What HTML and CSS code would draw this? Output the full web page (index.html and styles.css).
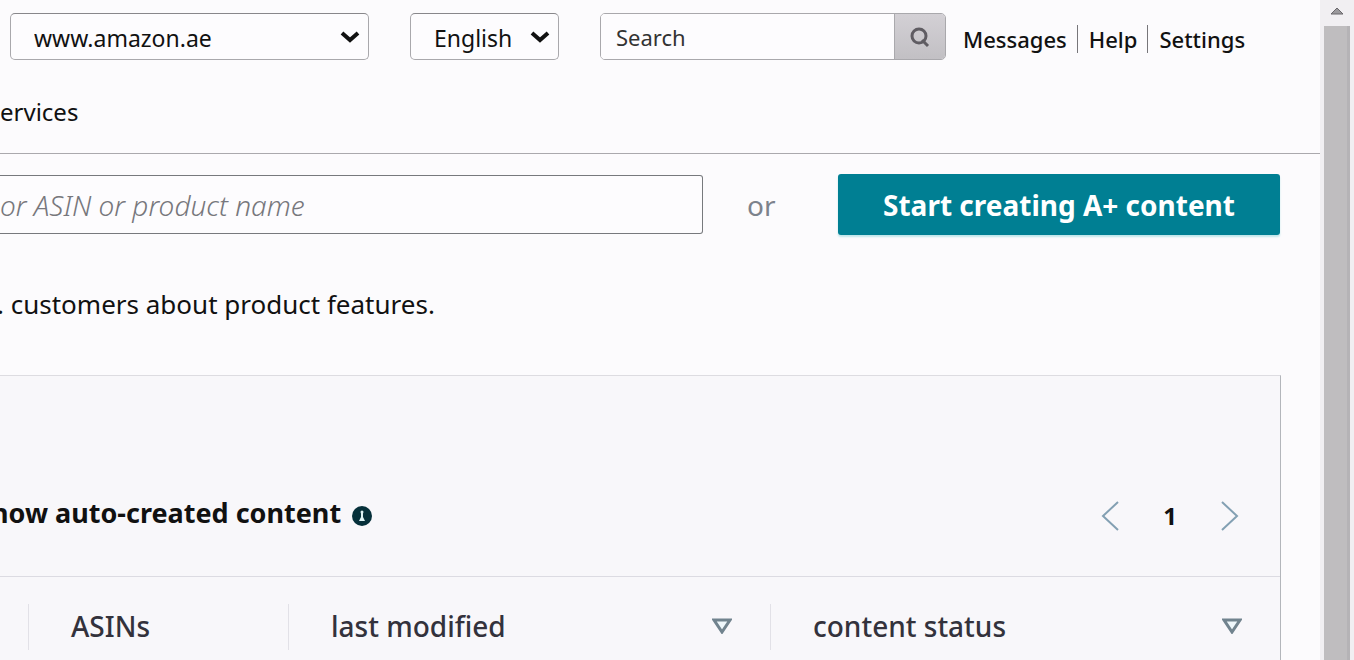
FILE: index.html
```
<!DOCTYPE html>
<html lang="en">
<head>
    <meta charset="UTF-8">
    <title>A+ Content Manager</title>
    <link rel="stylesheet" href="styles.css">
</head>
<body>
    <div class="window">
        <div class="page">
            <!-- Top bar -->
            <header class="header">
                <div class="topbar">
                    <div class="dropdown marketplace">
                        <select aria-label="Marketplace">
                            <option>www.amazon.ae</option>
                        </select>
                        <svg class="chevron" viewBox="0 0 20 14"><path d="M2 3l8 7 8-7" /></svg>
                    </div>
                    <div class="dropdown language">
                        <select aria-label="Language">
                            <option>English</option>
                        </select>
                        <svg class="chevron" viewBox="0 0 20 14"><path d="M2 3l8 7 8-7" /></svg>
                    </div>
                    <form class="search">
                        <input type="text" placeholder="Search" aria-label="Search">
                        <button type="button" aria-label="Go">
                            <svg viewBox="0 0 22 22"><circle cx="10" cy="10" r="7" /><path d="M13 14l6 6" /></svg>
                        </button>
                    </form>
                    <nav class="links">
                        <a href="#">Messages</a>
                        <a href="#">Help</a>
                        <a href="#">Settings</a>
                    </nav>
                </div>
                <nav class="menu"><a href="#">ervices</a></nav>
            </header>

            <main>
                <div class="create">
                    <input class="asin" type="text" placeholder="or ASIN or product name" aria-label="ASIN or product name">
                    <span class="or">or</span>
                    <button class="start" type="button">Start creating A+ content</button>
                </div>
                <p class="intro">. customers about product features.</p>

                <!-- Content list -->
                <section class="panel">
                    <div class="toolbar">
                        <div class="show">
                            <span>how auto-created content</span>
                            <svg class="info" viewBox="0 0 20 20"><circle cx="10" cy="10" r="10" fill="#06303a" /><circle cx="10" cy="6" r="1.5" fill="#dff3f5" /><path d="M9 7h2v4l2 4H7l2-4z" fill="#dff3f5" /></svg>
                        </div>
                        <div class="pager">
                            <button type="button" aria-label="Previous page"><svg viewBox="0 0 18 30"><path d="M17 1L2 15l15 14" /></svg></button>
                            <span>1</span>
                            <button type="button" aria-label="Next page"><svg viewBox="0 0 18 30"><path d="M1 1l15 14L1 29" /></svg></button>
                        </div>
                    </div>
                    <table class="list">
                        <thead>
                            <tr>
                                <th class="col-first"></th>
                                <th class="col-asins"><div>ASINs</div></th>
                                <th class="col-modified"><div>last modified <svg viewBox="0 0 20 16"><path d="M2 2h16l-8 12z" /></svg></div></th>
                                <th><div>content status <svg viewBox="0 0 20 16"><path d="M2 2h16l-8 12z" /></svg></div></th>
                            </tr>
                        </thead>
                    </table>
                </section>
            </main>
        </div>
        <div class="scrollbar">
            <svg viewBox="0 0 14 8"><path d="M1 7l6-6 6 6z" /></svg>
            <div class="thumb"></div>
        </div>
    </div>
</body>
</html>
```
FILE: styles.css
```
* {
    box-sizing: border-box;
}
body {
    margin: 0;
    font-family: "Noto Sans", sans-serif;
    font-size: 24px;
    color: #111;
    background: #fcfbfd;
}
input, select, button {
    font-family: inherit;
    color: inherit;
    margin: 0;
}
a {
    color: inherit;
    text-decoration: none;
}
svg {
    display: block;
    fill: none;
}
.window {
    display: flex;
    height: 100vh;
    overflow: hidden;
}
.page {
    flex: 1;
    min-width: 0;
    overflow: hidden;
}

/* Header */
.header {
    height: 154px;
    border-bottom: 1px solid #aaa9ad;
}
.topbar {
    display: flex;
    align-items: center;
    padding: 13px 0 0 10px;
}
.dropdown {
    display: grid;
    align-items: center;
}
.dropdown select, .dropdown .chevron {
    grid-area: 1 / 1;
}
.dropdown select {
    width: 100%;
    height: 47px;
    padding: 3px 23px 0;
    font-size: 23px;
    border: 1px solid #a9a8ac;
    border-top-color: #88878b;
    border-radius: 5px;
    background: #fdfcfe;
    appearance: none;
}
.marketplace {
    width: 359px;
    margin-right: 41px;
}
.language {
    width: 149px;
    margin-right: 41px;
}
.chevron {
    justify-self: end;
    width: 20px;
    height: 14px;
    margin-right: 9px;
    stroke: #111;
    stroke-width: 4;
    pointer-events: none;
}
.search {
    display: flex;
    width: 346px;
    height: 47px;
    margin-right: 17px;
    border: 1px solid #a9a8ac;
    border-radius: 5px;
    overflow: hidden;
}
.search input {
    flex: 1;
    min-width: 0;
    padding: 0 15px;
    font-size: 22px;
    border: 0;
    background: #fdfcfe;
}
.search input::placeholder {
    color: #333;
}
.search button {
    display: flex;
    align-items: center;
    justify-content: center;
    width: 51px;
    border: 0;
    border-left: 1px solid #aaa9ad;
    background: linear-gradient(#d3d0d5, #c2c0c4);
}
.search svg {
    width: 22px;
    height: 22px;
    stroke: #5f5c62;
    stroke-width: 3;
}
.links {
    display: flex;
    padding-top: 5px;
    font-size: 22px;
    font-weight: 500;
    line-height: 28px;
}
.links a + a {
    margin-left: 10px;
    padding-left: 11px;
    border-left: 1px solid #77767a;
}
.menu {
    margin-top: 35px;
    font-size: 24px;
    line-height: 34px;
}

/* Create row */
.create {
    display: flex;
    align-items: center;
    padding: 20px 40px 0 0;
}
.asin {
    flex: 1;
    min-width: 0;
    height: 59px;
    padding: 0 20px 0 0;
    font-size: 28px;
    border: 1px solid #77797d;
    border-left: 0;
    border-radius: 0 3px 3px 0;
    background: #fdfcfe;
}
.asin::placeholder {
    color: #77777c;
    font-style: italic;
    font-weight: 300;
}
.or {
    width: 135px;
    padding-left: 44px;
    font-size: 28px;
    line-height: 36px;
    color: #7c828c;
}
.start {
    width: 442px;
    height: 61px;
    padding: 0;
    font-size: 28px;
    font-weight: bold;
    color: #fff;
    border: 0;
    border-radius: 3px;
    background: #007f93;
    box-shadow: 0 2px 2px #bfe6ea;
}
.intro {
    margin: 51px 0 0 -3px;
    font-size: 26px;
    line-height: 36px;
}

/* List panel */
.panel {
    height: 400px;
    margin: 53px 39px 0 0;
    border-top: 1px solid #dddce1;
    border-right: 1px solid #b3b6bb;
    background: #f8f7fa;
}
.toolbar {
    display: flex;
    justify-content: space-between;
    height: 201px;
    padding: 119px 41px 0 0;
    border-bottom: 1px solid #dcdbe2;
    font-weight: bold;
    line-height: 36px;
}
.show {
    display: flex;
    margin-left: -9px;
    font-size: 27px;
}
.info {
    width: 20px;
    height: 20px;
    margin: 11px 0 0 11px;
}
.pager {
    display: flex;
    align-items: center;
    height: 42px;
    gap: 44px;
}
.pager button {
    padding: 0;
    border: 0;
    background: none;
}
.pager svg {
    width: 18px;
    height: 30px;
    stroke: #83a0b3;
    stroke-width: 2;
}
.list {
    width: 100%;
    table-layout: fixed;
    border-collapse: collapse;
}
.list th {
    padding: 27px 0 0;
    font-size: 28px;
    font-weight: 500;
    line-height: 36px;
    text-align: left;
    color: #33323c;
}
.list div {
    display: flex;
    align-items: center;
    justify-content: space-between;
    height: 46px;
    padding: 0 38px 2px 42px;
    border-left: 1px solid #e2e1e7;
}
.list svg {
    width: 20px;
    height: 16px;
    stroke: #71838e;
    stroke-width: 3;
    fill: #eef6fa;
}
.col-first {
    width: 28px;
}
.col-asins {
    width: 260px;
}
.col-modified {
    width: 482px;
}

/* Scrollbar */
.scrollbar {
    display: flex;
    flex-direction: column;
    width: 34px;
    padding: 0 4px;
    background: #f1eff2;
}
.scrollbar svg {
    width: 14px;
    height: 8px;
    margin: 7px auto 11px;
    fill: #9b999d;
    stroke: #69676b;
}
.thumb {
    flex: 1;
    background: #bfbdbf;
    border-right: 3px solid #b5b3b6;
}
```
